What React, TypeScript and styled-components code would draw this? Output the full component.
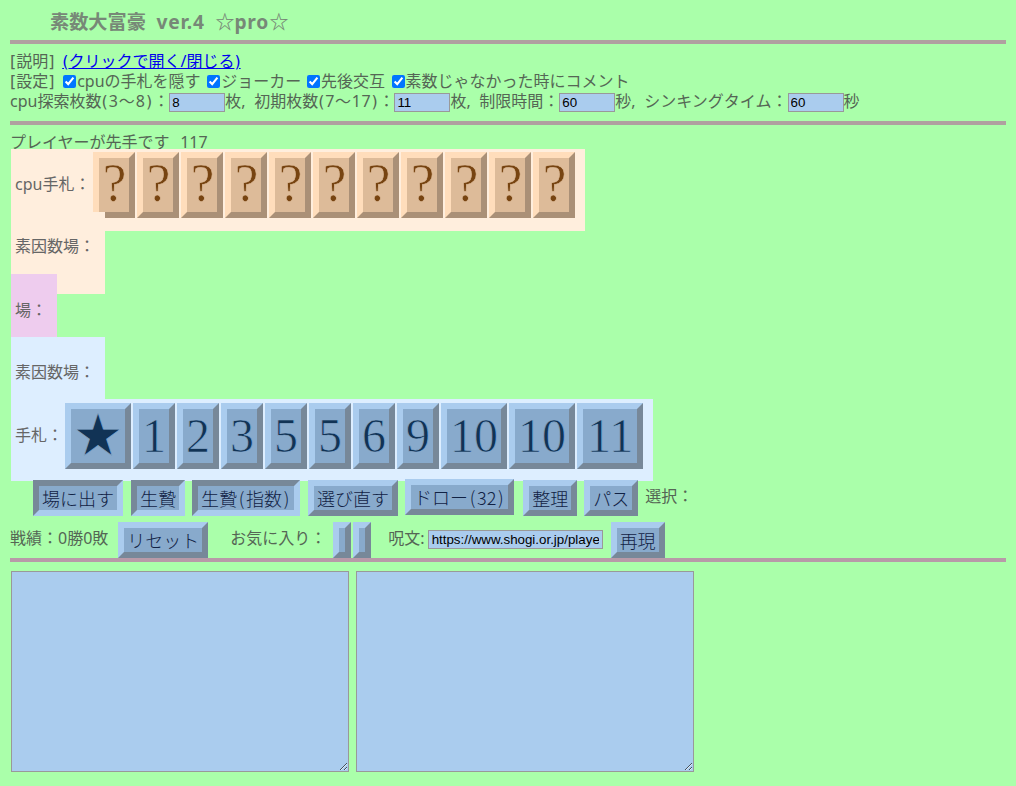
import React from "react";
import styled, { createGlobalStyle } from "styled-components";

const Global = createGlobalStyle`
  html, body { margin: 0; padding: 0; background: #aaffaa; }
  body {
    color: #556655;
    font-family: "Noto Sans", "Noto Sans CJK JP", sans-serif;
    font-size: 16px;
    line-height: 20px;
    word-spacing: 3.5px;
  }
`;

const Page = styled.div`
  width: 996px;
  padding: 0 10px;
`;

const Title = styled.h1`
  margin: 0;
  height: 40px;
  padding: 11px 0 0 40px;
  box-sizing: border-box;
  color: #778877;
  font: bold 19.2px/22px "Noto Sans", "Noto Sans CJK JP", sans-serif;
  white-space: nowrap;
  word-spacing: 5.5px;
`;

const TitleLatin = styled.span`
  letter-spacing: 0.8px;
`;

const Rule = styled.div<{ $tint?: boolean }>`
  height: 4px;
  background: ${(p) => (p.$tint ? "#b89aa8" : "#b0a0a0")};
`;

const Settings = styled.div`
  padding: 7px 0 10px;
`;

const Line = styled.div`
  height: 20px;
  white-space: nowrap;
`;

const LimitLine = styled(Line)`
  word-spacing: 4.5px;
`;

const Mark = styled.span`
  font-family: "DejaVu Sans", sans-serif;
`;

const Range = styled.span<{ $track: number }>`
  letter-spacing: ${(p) => p.$track}px;
`;

const Link = styled.a`
  color: #0000ee;
  text-decoration: underline;
  cursor: pointer;
`;

const Check = styled.input.attrs({ type: "checkbox", defaultChecked: true })<{ $ml: number }>`
  width: 13px;
  height: 13px;
  margin: 0 1px 0 ${(p) => p.$ml}px;
  vertical-align: -1px;
`;

const NumberBox = styled.input`
  box-sizing: border-box;
  width: 56px;
  height: 19px;
  padding: 1px 2px;
  margin: 2px 0 0;
  border: 1px solid #999;
  background: #aaccee;
  color: #000;
  font: 13.33px "Liberation Sans", sans-serif;
  vertical-align: top;
`;

const Notice = styled.div`
  height: 20px;
  margin: 7px 0 16.5px;
  white-space: nowrap;
  word-spacing: 6.5px;
`;

const Tones = {
  peach: "#ffeedd",
  pink: "#eeccee",
  blue: "#ddeeff",
};

const Row = styled.div<{ $tone: keyof typeof Tones }>`
  position: relative;
  display: flex;
  align-items: center;
  width: fit-content;
  box-sizing: border-box;
  height: 82px;
  margin: -19.5px 0 0 1px;
  padding: 3px 10px 13px 4px;
  background: ${(p) => Tones[p.$tone]};
  color: #666666;
`;

const RowLabel = styled.span<{ $up?: number }>`
  white-space: nowrap;
  margin-bottom: ${(p) => (p.$up ?? 0) * 2}px;
`;

const Hand = styled.div<{ $start: number; $drop?: number }>`
  display: flex;
  gap: 2px;
  margin-left: ${(p) => p.$start}px;
  margin-top: ${(p) => (p.$drop ?? 0) * 2}px;
`;

const Card = styled.div<{ $kind: "cpu" | "mine"; $wide?: boolean }>`
  box-sizing: border-box;
  width: ${(p) => (p.$wide ? 66 : 42)}px;
  height: 66px;
  border-style: solid;
  border-width: 6px;
  border-color: ${(p) =>
    p.$kind === "cpu"
      ? "#ffddbb #aa9077 #aa9077 #ffddbb"
      : "#aaccee #778899 #778899 #aaccee"};
  background: ${(p) => (p.$kind === "cpu" ? "#ddbb99" : "#88aacc")};
  color: ${(p) => (p.$kind === "cpu" ? "#774411" : "#113355")};
  -webkit-text-stroke: 0.7px ${(p) => (p.$kind === "cpu" ? "#ddbb99" : "#88aacc")};
  font-family: "Liberation Serif", "Noto Sans CJK JP", serif;
  font-size: ${(p) => (p.$kind === "cpu" ? 54 : 48)}px;
  line-height: ${(p) => (p.$kind === "cpu" ? 51 : 54)}px;
  text-align: center;
`;

const Buttons = styled.div`
  position: relative;
  display: flex;
  align-items: flex-start;
  height: 42px;
  margin-top: -1px;
  padding-left: 23px;
  white-space: nowrap;
`;

const Key = styled.button<{ $pressed?: boolean; $ml?: number; $lift?: boolean; $w?: number }>`
  box-sizing: border-box;
  flex: none;
  width: ${(p) => (p.$w ? `${p.$w}px` : "auto")};
  height: 36px;
  padding: 0 3px 4px;
  margin: ${(p) => (p.$lift ? -1 : 0)}px 0 0 ${(p) => p.$ml ?? 0}px;
  border-style: solid;
  border-width: 6px;
  border-color: ${(p) =>
    p.$pressed
      ? "#778899 #aaccee #aaccee #778899"
      : "#aaccee #778899 #778899 #aaccee"};
  background: #88aacc;
  color: #112244;
  font: 300 18px/24px "Noto Sans CJK JP", sans-serif;
`;

const KeyParen = styled.span`
  display: inline-block;
  width: 9px;
  text-align: center;
`;

const ButtonNote = styled.span<{ $ml: number }>`
  flex: none;
  margin-left: ${(p) => p.$ml}px;
  line-height: 32px;
`;

const Stats = styled.div`
  display: flex;
  align-items: center;
  height: 36px;
  white-space: nowrap;
`;

const StatNote = styled(ButtonNote)`
  margin-bottom: 4px;
`;

const Spell = styled.input`
  box-sizing: border-box;
  flex: none;
  width: 175px;
  height: 19px;
  margin: 0 0 2px 3px;
  padding: 1px 3px;
  border: 1px solid #999;
  background: #aaccee;
  color: #000;
  font: 13.33px "Liberation Sans", sans-serif;
`;

const Notes = styled.div`
  display: flex;
  gap: 7px;
  margin: 9px 0 0 1px;
`;

const Memo = styled.textarea`
  box-sizing: border-box;
  width: 338px;
  height: 201px;
  margin: 0;
  border: 1px solid #999;
  background: #aaccee;
`;

const cpuCards = Array.from({ length: 11 }, () => "?");
const myCards = ["★", "1", "2", "3", "5", "5", "6", "9", "10", "10", "11"];

export default function App() {
  return (
    <Page>
      <Global />
      <Title>
        素数大富豪 <TitleLatin>ver.4</TitleLatin> ☆<TitleLatin>pro</TitleLatin>☆
      </Title>
      <Rule />
      <Settings>
        <Line>
          <Mark>[</Mark>説明<Mark>]</Mark> <Link><Mark>(</Mark>クリックで開く/閉じる<Mark>)</Mark></Link>
        </Line>
        <Line>
          <Mark>[</Mark>設定<Mark>]</Mark> <Check $ml={1} />cpuの手札を隠す <Check $ml={-1} />ジョーカー <Check $ml={-2} />先後交互 <Check $ml={-1} />素数じゃなかった時にコメント
        </Line>
        <LimitLine>
          cpu探索枚数<Range $track={1}><Mark>(</Mark>3〜8<Mark>)</Mark></Range>：<NumberBox defaultValue="8" />枚, 初期枚数<Range $track={0.7}><Mark>(</Mark>7〜17<Mark>)</Mark></Range>：<NumberBox defaultValue="11" />枚, 制限時間：<NumberBox defaultValue="60" />秒, シンキングタイム：<NumberBox defaultValue="60" />秒
        </LimitLine>
      </Settings>
      <Rule />
      <Notice>プレイヤーが先手です 117</Notice>
      <Row $tone="peach">
        <RowLabel $up={1}>cpu手札：</RowLabel>
        <Hand $start={3}>
          {cpuCards.map((c, i) => (
            <Card key={i} $kind="cpu">{c}</Card>
          ))}
        </Hand>
      </Row>
      <Row $tone="peach"><RowLabel $up={2}>素因数場：</RowLabel></Row>
      <Row $tone="pink"><RowLabel>場：</RowLabel></Row>
      <Row $tone="blue"><RowLabel $up={1}>素因数場：</RowLabel></Row>
      <Row $tone="blue">
        <RowLabel>手札：</RowLabel>
        <Hand $start={2} $drop={1}>
          {myCards.map((c, i) => (
            <Card key={i} $kind="mine" $wide={c.length > 1 || c === "★"}>{c}</Card>
          ))}
        </Hand>
      </Row>
      <Buttons>
        <Key $pressed>場に出す</Key>
        <Key $pressed $ml={8}>生贄</Key>
        <Key $pressed $ml={7}>生贄<KeyParen>(</KeyParen>指数<KeyParen>)</KeyParen></Key>
        <Key $ml={8}>選び直す</Key>
        <Key $ml={7} $lift>ドロー<KeyParen>(</KeyParen>32<KeyParen>)</KeyParen></Key>
        <Key $ml={9}>整理</Key>
        <Key $ml={7}>パス</Key>
        <ButtonNote $ml={7}>選択：</ButtonNote>
      </Buttons>
      <Stats>
        <StatNote $ml={0}>戦績：0勝0敗</StatNote>
        <Key $ml={10}>リセット</Key>
        <StatNote $ml={22}>お気に入り：</StatNote>
        <Key $ml={7} $w={18} />
        <Key $ml={2} $w={18} />
        <StatNote $ml={17}>呪文:</StatNote>
        <Spell defaultValue="https://www.shogi.or.jp/player/" />
        <Key $ml={8}>再現</Key>
      </Stats>
      <Rule $tint />
      <Notes>
        <Memo />
        <Memo />
      </Notes>
    </Page>
  );
}
